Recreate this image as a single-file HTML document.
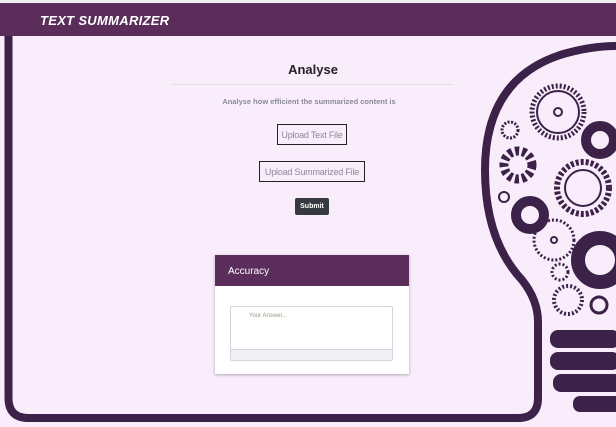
<!DOCTYPE html>
<html><head><meta charset="utf-8"><style>
*{margin:0;padding:0;box-sizing:border-box}
body{width:616px;height:427px;overflow:hidden;background:#f9ecfb;font-family:"Liberation Sans",sans-serif;position:relative}
.top{position:absolute;left:0;top:0;width:616px;height:3px;background:#eee}
.hdr{position:absolute;left:0;top:3px;width:616px;height:33px;background:#5a2d5a}
.logo{position:absolute;left:40px;top:10px;color:#fff;font-weight:bold;font-style:italic;font-size:13px;letter-spacing:0.3px}
svg{position:absolute;left:0;top:0}
.h{position:absolute;left:0;width:616px;text-align:center}
.btn{position:absolute;border:1.5px solid #222;color:#8a8a9a;font-size:9px;letter-spacing:-0.2px;white-space:nowrap;height:21px;display:flex;align-items:center;justify-content:center;background:transparent}
.card{position:absolute;left:215px;top:255px;width:194px;height:119px;background:#fff;box-shadow:0 1px 3px rgba(0,0,0,.3)}
.ch{height:31px;background:#5a2d5a;color:#fff;font-size:10px;padding:11px 0 0 13px}
.ta{position:absolute;left:15px;top:51px;width:163px;height:55px;border:1px solid #d4d4dc;border-radius:2px}
.ta div{position:absolute;left:0;bottom:0;width:100%;height:11px;background:#f0f0f5;border-top:1px solid #d4d4dc}
</style></head><body>
<div class="top"></div>
<div class="hdr"><div class="logo">TEXT SUMMARIZER</div></div>
<svg width="616" height="427">
<path d="M8.5 36 V398 Q8.5 418 28.5 418 H518 Q538 418 538 398 V322 Q538 300 522 280 Q485 240 485 170 Q485 80 560 55 Q590 46 616 46" fill="none" stroke="#3c2148" stroke-width="8"/>
<g fill="#3c2148">
<rect x="550" y="330" width="70" height="18" rx="8"/>
<rect x="550" y="352" width="70" height="18" rx="8"/>
<rect x="553" y="374" width="70" height="18" rx="8"/>
<rect x="573" y="396" width="50" height="16" rx="7"/>
</g>
<g fill="none" stroke="#3c2148">
<circle cx="558" cy="112" r="26" stroke-width="5" stroke-dasharray="2 2"/><circle cx="558" cy="112" r="21" stroke-width="2"/>
<circle cx="558" cy="112" r="4" stroke-width="2"/>
<circle cx="510" cy="130" r="8" stroke-width="3" stroke-dasharray="2 1.5"/>
<circle cx="518" cy="165" r="14" stroke-width="9" stroke-dasharray="4 3"/>
<circle cx="583" cy="188" r="26" stroke-width="6" stroke-dasharray="3 2"/><circle cx="583" cy="188" r="18" stroke-width="2"/>
<circle cx="530" cy="215" r="14" stroke-width="10"/>
<circle cx="554" cy="240" r="20" stroke-width="3" stroke-dasharray="2 2"/><circle cx="554" cy="240" r="3" stroke-width="2"/>
<circle cx="600" cy="260" r="22" stroke-width="14"/>
<circle cx="568" cy="300" r="14" stroke-width="4" stroke-dasharray="2 2"/>
<circle cx="600" cy="140" r="14" stroke-width="10"/>
<circle cx="504" cy="197" r="5" stroke-width="2"/>
<circle cx="560" cy="272" r="8" stroke-width="3" stroke-dasharray="2 2"/>
<circle cx="599" cy="305" r="8" stroke-width="3"/>
</g>
</svg>
<div class="h" style="top:62px;font-size:13px;font-weight:bold;color:#222;left:5px">Analyse</div>
<div style="position:absolute;left:172px;top:84px;width:282px;height:1px;background:#e6dce8"></div>
<div class="h" style="top:97px;font-size:7.5px;font-weight:bold;color:#8a8a9a;left:1px">Analyse how efficient the summarized content is</div>
<div class="btn" style="left:277px;top:124px;width:70px">Upload Text File</div>
<div class="btn" style="left:259px;top:161px;width:106px">Upload Summarized File</div>
<div style="position:absolute;left:295px;top:198px;width:34px;height:17px;background:#343a40;border-radius:2px;color:#fff;font-size:7px;font-weight:bold;text-align:center;line-height:17px">Submit</div>
<div class="card"><div class="ch">Accuracy</div><div class="ta"><span style="position:absolute;left:18px;top:6px;font-size:6px;color:#a09888">Your Answer...</span><div></div></div></div>
</body></html>
